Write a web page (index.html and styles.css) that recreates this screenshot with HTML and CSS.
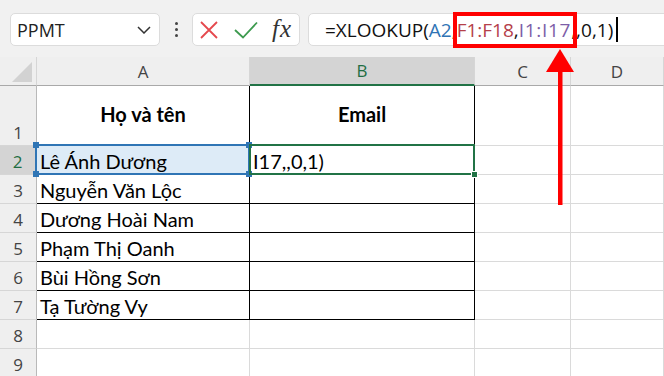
FILE: index.html
```html
<!DOCTYPE html>
<html lang="vi">
<head>
<meta charset="utf-8">
<link rel="stylesheet" href="styles.css">
</head>
<body>
<div class="app">
  <div class="topbar">
    <div class="namebox">
      <span class="nb-text">PPMT</span>
      <svg class="chev" width="14" height="8" viewBox="0 0 14 8"><path d="M1 1 L7 7 L13 1" fill="none" stroke="#333" stroke-width="1.5"/></svg>
    </div>
    <div class="dots"><i></i><i></i><i></i></div>
    <div class="fxbtns">
      <svg class="ic-x" width="18" height="18" viewBox="0 0 18 18"><path d="M1 1 L17 17 M17 1 L1 17" stroke="#e5484d" stroke-width="1.8" fill="none"/></svg>
      <svg class="ic-check" width="24" height="18" viewBox="0 0 24 18"><path d="M1 9 L9 16.5 L23 1.5" stroke="#3d9a4f" stroke-width="1.8" fill="none"/></svg>
      <span class="fx">fx</span>
    </div>
    <div class="formula"><span>=XLOOKUP(</span><span class="r-blue">A2</span><span>,</span><span class="r-red">F1:F18</span><span>,</span><span class="r-purple">I1:I17</span><span>,,0,1)</span><span class="caret"></span></div>
  </div>

  <div class="grid">
    <div class="cell ch corner"><svg width="22" height="22" viewBox="0 0 22 22"><path d="M21 1 L21 21 L1 21 Z" fill="#d2d2d2"/></svg></div>
    <div class="cell ch">A</div>
    <div class="cell ch sel">B</div>
    <div class="cell ch">C</div>
    <div class="cell ch">D</div>

    <div class="cell rh bottom">1</div>
    <div class="cell t head">Họ và tên</div>
    <div class="cell t head">Email</div>
    <div class="cell"></div>
    <div class="cell"></div>

    <div class="cell rh sel">2</div>
    <div class="cell t refcell">Lê Ánh Dương<div class="rng"><span class="k tl"></span><span class="k tr"></span><span class="k bl"></span><span class="k br"></span></div></div>
    <div class="cell t">I17,,0,1)<div class="active"><span class="handle"></span></div></div>
    <div class="cell"></div>
    <div class="cell"></div>

    <div class="cell rh">3</div>
    <div class="cell t">Nguyễn Văn Lộc</div>
    <div class="cell t"></div>
    <div class="cell"></div>
    <div class="cell"></div>

    <div class="cell rh">4</div>
    <div class="cell t">Dương Hoài Nam</div>
    <div class="cell t"></div>
    <div class="cell"></div>
    <div class="cell"></div>

    <div class="cell rh">5</div>
    <div class="cell t">Phạm Thị Oanh</div>
    <div class="cell t"></div>
    <div class="cell"></div>
    <div class="cell"></div>

    <div class="cell rh">6</div>
    <div class="cell t">Bùi Hồng Sơn</div>
    <div class="cell t"></div>
    <div class="cell"></div>
    <div class="cell"></div>

    <div class="cell rh">7</div>
    <div class="cell t">Tạ Tường Vy</div>
    <div class="cell t"></div>
    <div class="cell"></div>
    <div class="cell"></div>

    <div class="cell rh">8</div>
    <div class="cell"></div>
    <div class="cell"></div>
    <div class="cell"></div>
    <div class="cell"></div>

    <div class="cell rh">9</div>
    <div class="cell"></div>
    <div class="cell"></div>
    <div class="cell"></div>
    <div class="cell"></div>
  </div>

  <div class="callout"></div>
  <svg class="arrow" width="40" height="165" viewBox="0 0 40 165">
    <polygon points="20,4 34,27 6,27" fill="#ff0000"/>
    <rect x="18" y="24" width="4.5" height="136" fill="#ff0000"/>
  </svg>
</div>
</body>
</html>
```

FILE: styles.css
```css
* {
  box-sizing: border-box;
  margin: 0;
  padding: 0;
}

html, body {
  width: 664px;
  height: 376px;
  overflow: hidden;
  background: #ffffff;
}

.app {
  position: relative;
  width: 664px;
  height: 376px;
  overflow: hidden;
  font-family: "Open Sans", "Noto Sans", sans-serif;
}

/* ---------- top bar ---------- */
.topbar {
  height: 57px;
  background: #f1f1f1;
  display: flex;
  align-items: flex-start;
  padding: 13px 0 0 10px;
}

.namebox {
  flex: none;
  width: 150px;
  height: 33px;
  background: #fff;
  border: 1px solid #dcdcdc;
  border-radius: 5px;
  display: flex;
  align-items: center;
  justify-content: space-between;
  padding: 0 8px 0 6px;
}

.nb-text {
  font-size: 18px;
  color: #222;
}

.dots {
  flex: none;
  width: 32px;
  height: 33px;
  display: flex;
  flex-direction: column;
  align-items: center;
  justify-content: center;
  gap: 3px;
}

.dots i {
  display: block;
  width: 3px;
  height: 3px;
  border-radius: 50%;
  background: #444;
}

.fxbtns {
  flex: none;
  width: 108px;
  height: 33px;
  background: #fff;
  border: 1px solid #dcdcdc;
  border-radius: 5px;
  display: flex;
  align-items: center;
  padding-left: 7px;
}

.ic-check {
  margin-left: 16px;
}

.fx {
  margin-left: 14px;
  font-family: "Liberation Serif", "DejaVu Serif", serif;
  font-style: italic;
  font-size: 25px;
  line-height: 1;
  color: #333;
  letter-spacing: 1px;
  margin-top: -3px;
}

.formula {
  flex: none;
  margin-left: 8px;
  width: 380px;
  height: 33px;
  background: #fff;
  border: 1px solid #dcdcdc;
  border-radius: 5px;
  display: flex;
  align-items: center;
  padding-left: 16px;
  font-size: 19px;
  white-space: nowrap;
  color: #111;
}

.r-blue { color: #2f74b5; }
.r-red { color: #b5404a; }
.r-purple { color: #7d5ea8; letter-spacing: 0.7px; }

.caret {
  display: inline-block;
  width: 1.5px;
  height: 25px;
  background: #000;
  margin-left: 3px;
}

/* ---------- grid ---------- */
.grid {
  display: grid;
  grid-template-columns: 37px 213px 225px 96px 1fr;
  grid-template-rows: 29px 60px repeat(8, 29px);
}

.cell {
  position: relative;
  border-right: 1px solid #dadada;
  border-bottom: 1px solid #dadada;
  font-family: "Lato", "Open Sans", sans-serif;
  font-size: 20px;
  color: #000;
  display: flex;
  align-items: center;
  padding: 2px 0 0 3px;
  white-space: nowrap;
}

.ch {
  background: #efefef;
  border-right: 1px solid #d6d6d6;
  border-bottom: 1px solid #a9a9a9;
  font-family: "Open Sans", sans-serif;
  font-size: 17px;
  color: #444;
  justify-content: center;
  padding: 0;
}

.ch.sel {
  background: #d4d4d4;
  color: #1f6e43;
  border-bottom: 2px solid #217346;
}

.corner {
  align-items: flex-end;
  justify-content: flex-end;
  padding: 0 3px 2px 0;
}

.rh {
  background: #efefef;
  border-right: 1px solid #b9b9b9;
  border-bottom: 1px solid #d6d6d6;
  font-family: "Open Sans", sans-serif;
  font-size: 17px;
  color: #444;
  justify-content: center;
  padding: 2px 0 0 0;
}

.rh.bottom {
  align-items: flex-end;
  padding-bottom: 1px;
}

.rh.sel {
  background: #d4d4d4;
  color: #1f6e43;
  border-right: 2px solid #217346;
}

.t {
  border-right-color: #000;
  border-bottom-color: #000;
}

.head {
  font-weight: 700;
  justify-content: center;
  padding: 0 0 4px 0;
}

.refcell {
  background: #ddebf7;
}

.rng {
  position: absolute;
  left: -2px;
  top: -2px;
  right: -1px;
  bottom: -1px;
  border: 2px solid #2f75b5;
  z-index: 2;
}

.k {
  position: absolute;
  width: 6px;
  height: 6px;
  background: #2f75b5;
}

.tl { left: -4px; top: -4px; }
.tr { right: -4px; top: -4px; }
.bl { left: -4px; bottom: -4px; }
.br { right: -4px; bottom: -4px; }

.active {
  position: absolute;
  left: -1px;
  top: -2px;
  right: -1px;
  bottom: -1px;
  border: 2px solid #217346;
  z-index: 3;
}

.handle {
  position: absolute;
  right: -5px;
  bottom: -5px;
  width: 7px;
  height: 7px;
  background: #217346;
  border: 1px solid #fff;
}

/* ---------- annotation ---------- */
.callout {
  position: absolute;
  left: 453px;
  top: 12px;
  width: 124px;
  height: 36px;
  border: 4px solid #ff0000;
  z-index: 5;
}

.arrow {
  position: absolute;
  left: 540px;
  top: 45px;
  z-index: 5;
}
```
